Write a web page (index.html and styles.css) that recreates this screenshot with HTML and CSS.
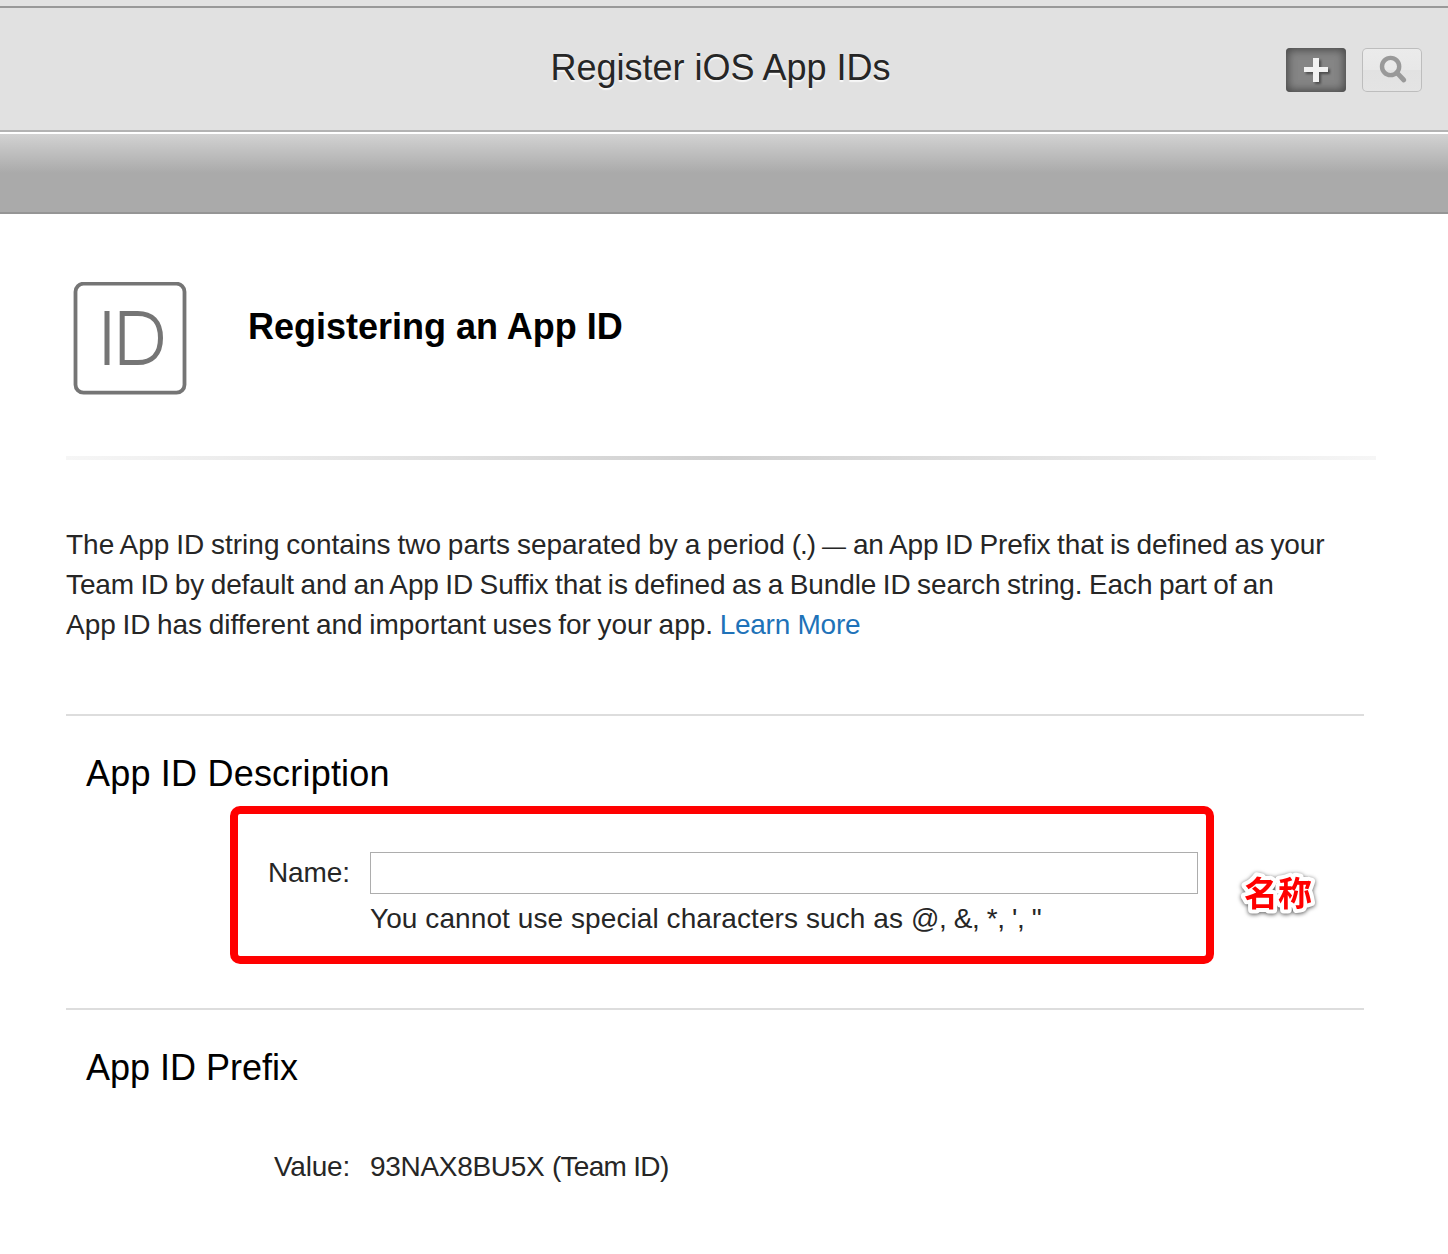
FILE: index.html
```html
<!DOCTYPE html>
<html lang="en">
<head>
<meta charset="utf-8">
<title>Register iOS App IDs</title>
<link rel="stylesheet" href="styles.css">
</head>
<body>
<div class="topstrip"></div>
<header class="header">
  <h1 class="title">Register iOS App IDs</h1>
  <div class="tools">
    <button class="btn btn-add" aria-label="Add">
      <svg width="28" height="28" viewBox="0 0 28 28"><path d="M11 2h6v9h9v5h-9v10h-6v-10h-9v-5h9z" fill="#f2f2f2"/></svg>
    </button>
    <button class="btn btn-search" aria-label="Search">
      <svg width="60" height="44" viewBox="0 0 60 44" fill="none" stroke="#999"><circle cx="28.6" cy="18.500" r="8.600" stroke-width="4.400"/><path d="M34.800 24.700L41.800 32" stroke-width="4.800" stroke-linecap="round"/></svg>
    </button>
  </div>
</header>
<div class="subbar"></div>
<main class="content">
  <section class="intro">
    <svg class="id-icon" width="114" height="114" viewBox="0 0 114 114" fill="none" stroke="#757575"><rect x="2.500" y="1.700" width="109" height="109" rx="8" stroke-width="3.800"/><path d="M34 29v54M49.200 31.500v49h15.500c14 0 22.800-8 22.800-24.500s-8.800-24.500-22.800-24.500z" stroke-width="5"/></svg>
    <h2 class="intro-title">Registering an App ID</h2>
  </section>
  <div class="fade-rule"></div>
  <p class="lead"><span class="l1">The App ID string contains two parts separated by a period <span class="paren">(.)</span> <span class="dash">—</span> <span class="tail">an App ID Prefix that is defined as your</span></span><br><span class="l2">Team ID by default and an App ID Suffix that is defined as a Bundle ID search string. Each part of an</span><br><span class="l3">App ID has different and important uses for your app. </span><a class="link">Learn More</a></p>
  <section class="block">
    <h3 class="block-title wide">App ID Description</h3>
    <div class="annotated">
      <div class="frame">
        <label class="label" for="name">Name:</label>
        <div class="field">
          <input class="input" id="name" type="text">
          <div class="hint">You cannot use special characters such as <span class="marks">@, &amp;, *, ', "</span></div>
        </div>
      </div>
      <svg class="note" width="90" height="60"><text x="14" y="41">名称</text></svg>
    </div>
  </section>
  <section class="block">
    <h3 class="block-title">App ID Prefix</h3>
    <div class="row">
      <span class="row-label">Value:</span>
      <span class="value">93NAX8BU5X <span class="team">(Team ID)</span></span>
    </div>
  </section>
</main>
</body>
</html>
```
FILE: styles.css
```css
* { box-sizing: border-box; }
body {
  margin: 0;
  height: 1254px;
  overflow: hidden;
  background: #fff;
  color: #262626;
  font: 28px/40px "Liberation Sans", Arial, sans-serif;
}
h1, h2, h3, p { margin: 0; }
.topstrip { height: 8px; background: #e2e2e2; border-bottom: 2px solid #999; }
.header {
  display: grid;
  grid-template-columns: 1fr auto 1fr;
  height: 124px;
  padding: 40px 26px 0;
  background: #e1e1e1;
  border-bottom: 2px solid #b3b3b3;
}
.title {
  grid-column: 2;
  margin-right: 7px;
  font-size: 36px;
  font-weight: 400;
  line-height: 40px;
  text-shadow: 0 2px 1px #f8f8f8;
}
.tools { display: flex; justify-content: flex-end; gap: 16px; }
.btn {
  display: flex;
  align-items: center;
  justify-content: center;
  width: 60px;
  height: 44px;
  padding: 0;
  border: 0;
  border-radius: 4px;
}
.btn-add { background: #858585; box-shadow: inset 0 0 9px 2px #484848; }
.btn-add svg { filter: drop-shadow(2px 2px 1px #4d4d4d); }
.btn-search {
  border-radius: 5px;
  background: linear-gradient(#ebebeb 0, #e8e8e8 50%, #e2e2e2 50%, #e4e4e4);
  box-shadow: inset 0 0 0 1px #bdbdbd;
}
.subbar {
  height: 82px;
  border-top: 2px solid #fff;
  border-bottom: 2px solid #959595;
  background: linear-gradient(#d2d2d2, #aaa 50%, #aaa);
}
.content { padding: 68px 72px 0 66px; }
.intro { display: flex; gap: 61px; height: 174px; padding-left: 7px; }
.intro-title { margin-top: 25px; color: #000; font-size: 36px; line-height: 40px; }
.fade-rule { height: 4px; background: linear-gradient(90deg, #f6f6f6, #d0d0d0 50%, #f6f6f6); }
.lead { height: 254px; padding-top: 65px; white-space: nowrap; }
.l1 { word-spacing: -.95px; }
.paren { letter-spacing: -1px; }
.dash { font-size: 24px; line-height: 1; }
.tail { letter-spacing: -.09px; word-spacing: -1.1px; }
.l2 { letter-spacing: -.1px; word-spacing: -1.2px; }
.l3 { word-spacing: -1.2px; }
.link { color: #2072b8; letter-spacing: -.25px; }
.block { width: 1298px; height: 294px; border-top: 2px solid #ddd; padding-top: 38px; }
.block-title { margin-left: 20px; color: #000; font-size: 36px; font-weight: 400; line-height: 40px; }
.wide { letter-spacing: .2px; }
.annotated { display: flex; margin: 12px 0 0 164px; }
.frame { display: flex; width: 984px; height: 158px; padding: 38px 8px 0 30px; border: 8px solid #f00; border-radius: 10px; }
.label { width: 102px; padding-top: 1px; letter-spacing: -.1px; }
.input { display: block; width: 828px; height: 42px; border: 1px solid #adadad; background: #fff; }
.hint { margin-top: 5px; letter-spacing: .08px; white-space: pre; }
.marks { letter-spacing: -.4px; }
.note {
  margin: 59px 0 0 16px;
  filter: drop-shadow(0 1px 2px #555);
}
.note text {
  fill: #f00;
  stroke: #fff;
  stroke-width: 8px;
  stroke-linejoin: round;
  paint-order: stroke fill;
  font: 700 34px "Noto Sans CJK SC", sans-serif;
}
.row { display: flex; gap: 20px; margin-top: 59px; }
.row-label { width: 284px; text-align: right; letter-spacing: -.2px; }
.value { letter-spacing: -.3px; }
.team { letter-spacing: -.7px; }
```
